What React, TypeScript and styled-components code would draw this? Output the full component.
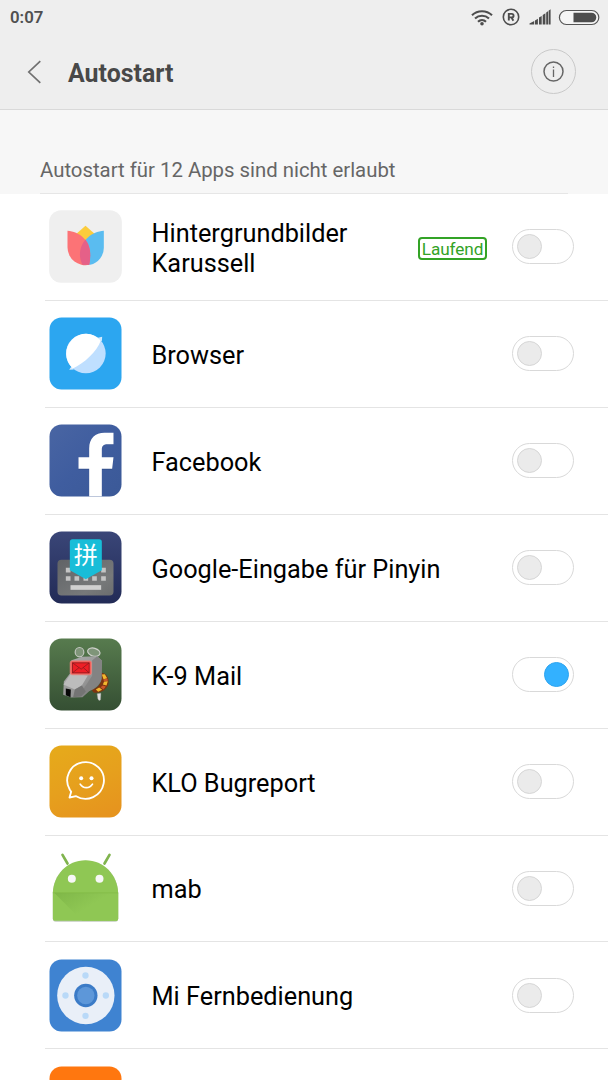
import type { ReactNode } from 'react'
import styled, { createGlobalStyle } from 'styled-components'

const GlobalStyle = createGlobalStyle`
  * {
    box-sizing: border-box;
  }

  body {
    margin: 0;
    background: #fff;
    font-family: Roboto, 'Noto Sans', sans-serif;
  }
`

const Screen = styled.div`
  width: 608px;
  height: 1080px;
  overflow: hidden;
  background: #fff;
`

const Header = styled.header`
  height: 110px;
  background: #eee;
  border-bottom: 1px solid #d9d9d9;
`

const StatusBar = styled.div`
  display: flex;
  align-items: center;
  justify-content: space-between;
  height: 34px;
  padding: 0 8px 0 10px;
`

const Clock = styled.span`
  font-size: 16.8px;
  font-weight: 600;
  line-height: 20px;
  color: #505050;
`

const StatusIcons = styled.div`
  display: flex;
  align-items: center;
`

const RoamingBadge = styled.svg`
  margin-left: 9px;
`

const SignalBars = styled.svg`
  margin-left: 9px;
`

const Battery = styled.svg`
  margin-left: 7px;
`

const TitleBar = styled.div`
  display: flex;
  align-items: center;
  height: 75px;
  padding: 0 32px 0 26px;
`

const BackButton = styled.button`
  display: flex;
  padding: 0;
  border: 0;
  background: none;
`

const Title = styled.h1`
  flex: 1;
  margin: 4px 0 0 25px;
  font-size: 24.9px;
  font-weight: 700;
  line-height: 30px;
  color: #484848;
`

const InfoButton = styled.button`
  display: flex;
  align-items: center;
  justify-content: center;
  width: 45px;
  height: 45px;
  margin-top: -1px;
  padding: 0;
  border: 1px solid #c9c9c9;
  border-radius: 50%;
  background: none;
`

const SectionHeader = styled.div`
  display: flex;
  height: 84px;
  padding: 0 40px;
  background: #f7f7f7;
`

const SectionTitle = styled.h2`
  flex: 1;
  margin: 0;
  padding-top: 47px;
  border-bottom: 1px solid #e6e6e6;
  font-size: 20.35px;
  font-weight: 400;
  line-height: 26px;
  color: #666;
`

const List = styled.ul`
  margin: 0;
  padding: 0 0 0 45px;
  list-style: none;
`

const Row = styled.li`
  display: flex;
  align-items: center;
  height: 106.93px;
  padding: 0 34px 0 4px;
  border-bottom: 1px solid #e4e4e4;
`

const AppIcon = styled.svg`
  display: block;
  flex: none;
  width: 73px;
  height: 73px;
  overflow: visible;
`

const AppName = styled.span`
  flex: 1;
  margin: 4px 0 0 29.5px;
  font-size: 25.3px;
  line-height: 30px;
  color: #000;
`

const Badge = styled.span`
  width: 69px;
  height: 23px;
  margin: 3px 25px 0 0;
  border: 2px solid #33a326;
  border-radius: 4px;
  font-size: 17.2px;
  line-height: 21px;
  letter-spacing: -0.1px;
  text-align: center;
  color: #33a326;
`

const Toggle = styled.button<{ $on?: boolean }>`
  display: flex;
  align-items: center;
  justify-content: ${props => (props.$on ? 'flex-end' : 'flex-start')};
  flex: none;
  width: 62px;
  height: 35px;
  padding: 0 4px;
  border: 1px solid #d9d9d9;
  border-radius: 18px;
  background: #fff;
`

const Knob = styled.span<{ $on?: boolean }>`
  width: 25px;
  height: 25px;
  border: 1px solid ${props => (props.$on ? '#2ea4ef' : '#d6d6d6')};
  border-radius: 50%;
  background: ${props => (props.$on ? '#33b1ff' : '#ebebeb')};
`

const WifiIcon = () => (
  <svg width="22" height="17" viewBox="0 0 22 17" fill="none" stroke="#4d4d4d" strokeWidth="2.1">
    <path d="M1 6.2a14.6 14.6 0 0 1 20 0M4 9.6a10.2 10.2 0 0 1 14 0M7 12.7a5.8 5.8 0 0 1 8 0" />
    <circle cx="11" cy="14.7" r="1.8" fill="#4d4d4d" stroke="none" />
  </svg>
)

const RoamingIcon = () => (
  <RoamingBadge width="18" height="18" viewBox="0 0 18 18" fill="none" stroke="#4d4d4d">
    <circle cx="9" cy="9" r="7.7" strokeWidth="1.6" />
    <path d="M6.8 12.6V5.9h3a1.7 1.7 0 0 1 0 3.5H7M9.5 9.5l1.9 3.2" strokeWidth="1.9" />
  </RoamingBadge>
)

const SignalIcon = () => (
  <SignalBars width="22" height="16" viewBox="0 0 22 16" fill="#4d4d4d">
    <path d="M0.5 15.500v-1L5.200 12v3.500zM6 15.500v-4.100l2.900-1.600v5.700zM10 15.500V8.600l2.700-1.600v8.500zM13.700 15.500V6l2.700-1.700v11.200zM17.200 15.500V3.500l1.800-1.200v13.200zM19.600 15.500V1.700L21.600.3v15.200z" />
  </SignalBars>
)

const BatteryIcon = () => (
  <Battery width="42" height="17" viewBox="0 0 42 17">
    <rect x="1.4" y="1.5" width="39.4" height="14" rx="7" fill="#f5f5f5" stroke="#555" strokeWidth="1.2" />
    <path d="M15.5 3.7h18a4.8 4.8 0 0 1 0 9.6h-18z" fill="#4d4d4d" />
  </Battery>
)

const Tile = ({ fill }: { fill: string }) => (
  <rect width="216" height="216" rx="36" fill={fill} />
)

const WallpaperArt = () => (
  <>
    <rect x="-1" y="-1" width="218" height="218" rx="36" fill="#efefef" />
    <path d="M108 46l29 25-29 55-29-55z" fill="#fbcc3c" />
    <path d="M163 61v49a53 53 0 0 1-41 53h-14c-14-6-16-24-15-40 2-31 34-60 70-62z" fill="#5abcf0" />
    <path d="M54 61c35 2 67 29 68 67 0 14-1 25-3 35a54 54 0 0 1-65-52z" fill="#fc7376" />
    <path d="M108 87c-20 23-21 53-9 76h20c6-25 5-54-11-76z" fill="#e56088" />
  </>
)

const BrowserArt = () => (
  <>
    <Tile fill="#2ca6f0" />
    <path d="M145 61l13-3-1 14zM68 144l-9 13 14-1z" fill="#d3eafe" />
    <circle cx="109" cy="108" r="59.5" fill="#bfdfff" />
    <path d="M154 69A59.5 59.5 0 1 0 70 153C103 138 142 103 154 69z" fill="#fff" />
  </>
)

const FacebookArt = () => (
  <>
    <defs>
      <linearGradient id="fb" x1="0" y1="0" x2="1" y2="1">
        <stop offset="0" stopColor="#4965a3" />
        <stop offset=".5" stopColor="#3f5d9f" />
        <stop offset="1" stopColor="#3b5997" />
      </linearGradient>
    </defs>
    <Tile fill="url(#fb)" />
    <path
      d="M119 216v-80H87v-36h32V73c0-30 18-47 46-47h27v34h-17c-13 0-18 5-18 16v24h35l-4 36h-31v80z"
      fill="#2f4a86"
      opacity=".6"
    />
    <path
      d="M119 216v-83H87V98h32V72c0-30 18-47 46-47h27v34h-17c-13 0-18 5-18 16v23h35l-4 35h-31v83z"
      fill="#fff"
    />
  </>
)

const PinyinArt = () => (
  <>
    <defs>
      <linearGradient id="keys" x1="0" y1="0" x2="1" y2="1">
        <stop offset="0" stopColor="#606366" />
        <stop offset=".7" stopColor="#77797a" />
        <stop offset="1" stopColor="#6b6d6e" />
      </linearGradient>
      <linearGradient id="night" x1="0" y1="0" x2="0" y2="1">
        <stop offset="0" stopColor="#3a4678" />
        <stop offset="1" stopColor="#222b56" />
      </linearGradient>
    </defs>
    <Tile fill="url(#night)" />
    <rect x="24" y="85" width="168" height="107" rx="12" fill="url(#keys)" />
    <path
      d="M49 109h14v14H49zM155 109h14v14h-14zM49 134h14v14H49zM75 134h14v14H75zM102 134h14v14h-14zM128 134h14v14h-14zM155 134h14v14h-14z"
      fill="#c4c4c4"
    />
    <path d="M63 161h92v14H63z" fill="#d0d0d0" />
    <path d="M61 31q0-8 8-8h80q8 0 8 8v85l-48 27-48-27z" fill="#18bdd8" />
    <text
      x="109"
      y="98"
      fill="#fff"
      fontFamily="'Noto Sans CJK SC', sans-serif"
      fontSize="72"
      textAnchor="middle"
    >
      拼
    </text>
  </>
)

const K9Art = () => (
  <>
    <defs>
      <linearGradient id="grass" x1="0" y1="0" x2="0" y2="1">
        <stop offset="0" stopColor="#577b4e" />
        <stop offset="1" stopColor="#354f33" />
      </linearGradient>
      <linearGradient id="metal" x1="0" y1="0" x2="1" y2="1">
        <stop offset="0" stopColor="#b0b0b0" />
        <stop offset=".6" stopColor="#959595" />
        <stop offset="1" stopColor="#6a6a6a" />
      </linearGradient>
    </defs>
    <Tile fill="url(#grass)" />
    <path d="M96 56l-3-8M124 53l6-7" stroke="#bbb" strokeWidth="4" />
    <ellipse cx="90" cy="41" rx="13" ry="14" fill="#7f9579" stroke="#c3c7c0" strokeWidth="3.5" />
    <ellipse cx="133" cy="41" rx="19" ry="12" transform="rotate(16 133 41)" fill="#7f9579" stroke="#cfd1cc" strokeWidth="3.5" />
    <path d="M143 166l2 14q3 10 8 4l1-20z" fill="#ddd" stroke="#aaa" />
    <path d="M154 104c14-4 26 14 23 31-4 19-26 31-45 27l-6-9c22-4 33-22 28-49z" fill="#7d3511" />
    <path d="M157 108l9-1 7 12-11 3zM164 129l11-1-4 13-11-3zM149 147l9 7-12 6-7-7z" fill="#f1b82e" />
    <path d="M162 122l12-1 1 6-12 2zM160 141l9 3-7 9-9-7z" fill="#c9572a" />
    <path d="M66 65l32-10 45-2 14 13-1 58c-6 18-21 29-37 34l-20 18-34 1-24-8 2-40 20-26z" fill="url(#metal)" />
    <path d="M128 66l15-13 14 13-1 55c-7 19-22 29-37 34l-20 17 4-22 25-38z" fill="#838383" />
    <path d="M64 106l51 5-18 30-21 12-34-15z" fill="#bcbcbc" />
    <path d="M76 153l21-12 12 18-14 15-24 2z" fill="#747474" />
    <path d="M49 150l15 3-1 23-14-6z" fill="#080808" />
    <rect x="62" y="67" width="64" height="42" rx="6" fill="#f4605b" stroke="#e78b84" strokeWidth="2" />
    <rect x="68" y="72" width="52" height="32" fill="#ee1f26" />
    <path d="M69 73l26 19 24-19M69 103l20-16M119 103l-18-16M69 73v30h50V73z" fill="none" stroke="#78191d" strokeWidth="2" />
  </>
)

const BugreportArt = () => (
  <>
    <defs>
      <linearGradient id="amber" x1=".3" y1="0" x2=".7" y2="1">
        <stop offset="0" stopColor="#e6a91b" />
        <stop offset=".5" stopColor="#e6a01d" />
        <stop offset="1" stopColor="#e6941e" />
      </linearGradient>
    </defs>
    <Tile fill="url(#amber)" />
    <path
      d="M80 152L60 156l5-17-4-6A55 55 0 1 1 80 152z"
      fill="none"
      stroke="#fff"
      strokeWidth="5.5"
      strokeLinejoin="round"
    />
    <circle cx="95" cy="98" r="6" fill="#fff" />
    <circle cx="126" cy="98" r="6" fill="#fff" />
    <path d="M92 116c9 14 28 14 37 0" fill="none" stroke="#fff" strokeWidth="5" strokeLinecap="round" />
  </>
)

const AndroidArt = () => (
  <>
    <defs>
      <linearGradient id="fold" x1="0" y1="0" x2="1" y2=".7">
        <stop offset="0" stopColor="#7fb748" />
        <stop offset=".6" stopColor="#8fc754" />
      </linearGradient>
    </defs>
    <g transform="translate(0 3)">
      <path d="M10 118c2-54 43-96 98-96s96 42 98 96v78q0 9-9 9H19q-9 0-9-9z" fill="#9aa892" opacity=".6" />
      <path d="M39 4l15 26M180 4l-15 26" stroke="#80b44e" strokeWidth="8" strokeLinecap="round" />
      <path d="M10 118c2-54 43-98 98-98s96 44 98 98v76q0 8-8 8H18q-8 0-8-8z" fill="#8fc754" />
      <path d="M14 118h192v76q0 8-8 8H98z" fill="url(#fold)" />
      <path d="M10 118h196" stroke="#80ba45" strokeWidth="2" />
      <circle cx="67" cy="76" r="12" fill="#f7f7f7" />
      <circle cx="150" cy="76" r="12" fill="#f7f7f7" />
    </g>
  </>
)

const RemoteArt = () => (
  <>
    <Tile fill="#3f83d1" />
    <circle cx="109" cy="108" r="86" fill="#e9eff8" />
    <circle cx="109" cy="108" r="35" fill="#3b7bc7" />
    <circle cx="109" cy="108" r="26" fill="#5d97d9" />
    <g fill="#b9d9f8">
      <circle cx="108" cy="48" r="9.5" />
      <circle cx="108" cy="169" r="9.5" />
      <circle cx="48" cy="108" r="9.5" />
      <circle cx="169" cy="108" r="9.5" />
    </g>
  </>
)

interface AppEntry {
  name: string
  art: ReactNode
  running?: boolean
  on?: boolean
}

const apps: AppEntry[] = [
  { name: 'Hintergrundbilder Karussell', art: <WallpaperArt />, running: true },
  { name: 'Browser', art: <BrowserArt /> },
  { name: 'Facebook', art: <FacebookArt /> },
  { name: 'Google-Eingabe für Pinyin', art: <PinyinArt /> },
  { name: 'K-9 Mail', art: <K9Art />, on: true },
  { name: 'KLO Bugreport', art: <BugreportArt /> },
  { name: 'mab', art: <AndroidArt /> },
  { name: 'Mi Fernbedienung', art: <RemoteArt /> },
]

const AppRow = ({ app }: { app: AppEntry }) => (
  <Row>
    <AppIcon viewBox="-1.5 -1.5 219 219">{app.art}</AppIcon>
    <AppName>{app.name}</AppName>
    {app.running && <Badge>Laufend</Badge>}
    <Toggle $on={app.on}>
      <Knob $on={app.on} />
    </Toggle>
  </Row>
)

const App = () => (
  <>
    <GlobalStyle />
    <Screen>
      <Header>
        <StatusBar>
          <Clock>0:07</Clock>
          <StatusIcons>
            <WifiIcon />
            <RoamingIcon />
            <SignalIcon />
            <BatteryIcon />
          </StatusIcons>
        </StatusBar>
        <TitleBar>
          <BackButton>
            <svg width="17" height="24" viewBox="0 0 17 24" fill="none" stroke="#707070" strokeWidth="1.7">
              <path d="M14.3 1.2L2.8 12l11.5 10.8" />
            </svg>
          </BackButton>
          <Title>Autostart</Title>
          <InfoButton>
            <svg width="21" height="21" viewBox="0 0 21 21" fill="none" stroke="#666">
              <circle cx="10.5" cy="10.5" r="9.5" strokeWidth="1.5" />
              <path d="M10.5 8.5v7.5M10.5 5.5v1.5" strokeWidth="1.3" />
            </svg>
          </InfoButton>
        </TitleBar>
      </Header>
      <SectionHeader>
        <SectionTitle>Autostart für 12 Apps sind nicht erlaubt</SectionTitle>
      </SectionHeader>
      <List>
        {apps.map(app => (
          <AppRow key={app.name} app={app} />
        ))}
        <Row>
          <AppIcon viewBox="-1.5 -1.5 219 219">
            <Tile fill="#ff770f" />
          </AppIcon>
        </Row>
      </List>
    </Screen>
  </>
)

export default App
